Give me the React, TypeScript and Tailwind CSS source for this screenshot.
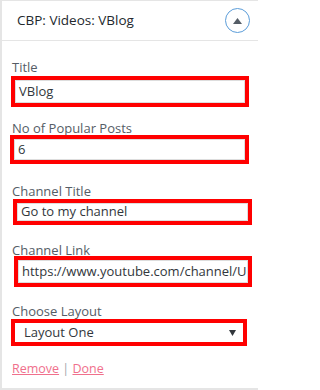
const fields = [
  {
    label: "Title",
    labelClass: "mt-[17px]",
    boxClass: "mt-[0px] ml-[9px] mr-[9px] h-[31px]",
    value: "VBlog",
  },
  {
    label: "No of Popular Posts",
    labelClass: "mt-[12px]",
    boxClass: "mt-[-2px] ml-[8px] mr-[9px] h-[29px]",
    value: "6",
  },
  {
    label: "Channel Title",
    labelClass: "mt-[18px]",
    boxClass: "mt-[-1px] ml-[11px] mr-[6px] h-[26px]",
    value: "Go to my channel",
  },
  {
    label: "Channel Link",
    labelClass: "mt-[16px]",
    boxClass: "mt-[-3px] ml-[12px] mr-[6px] h-[31px]",
    value: "https://www.youtube.com/channel/UCxYz1aBcDeFgHiJk",
  },
];

function TriangleUp() {
  return (
    <svg width="9" height="6" viewBox="0 0 9 6">
      <path d="M4.5 0 L9 6 L0 6 Z" fill="#555d66" />
    </svg>
  );
}

export default function App() {
  return (
    <div
      className="w-[258px] h-[390px] bg-white border-l-2 border-t border-b-2 border-[#e5e5e5] overflow-hidden"
      style={{ fontFamily: '"Open Sans", "Noto Sans", sans-serif' }}
    >
      <div className="h-[40px] border-b border-[#e5e5e5] flex items-center justify-between pl-[15px] pr-[8px]">
        <span className="text-[13.5px] text-[#23282d]">CBP: Videos: VBlog</span>
        <div className="w-[25px] h-[25px] rounded-full border border-[#5b9dd9] flex items-center justify-center">
          <TriangleUp />
        </div>
      </div>

      <div className="flex flex-col">
        {fields.map((f) => (
          <div key={f.label} className="flex flex-col">
            <label className={`${f.labelClass} pl-[10px] h-[18px] leading-[18px] text-[13px] text-[#555d66]`}>
              {f.label}
            </label>
            <div className={`${f.boxClass} border-4 border-[#ff0000]`}>
              <div className="h-full border border-[#ddd] flex items-center pl-[3px] overflow-hidden whitespace-nowrap text-[13px] text-[#32373c]">
                {f.value}
              </div>
            </div>
          </div>
        ))}

        <label className="mt-[15px] pl-[10px] h-[18px] leading-[18px] text-[13px] text-[#555d66]">
          Choose Layout
        </label>
        <div className="mt-[-1px] ml-[9px] mr-[11px] h-[27px] border-4 border-[#ff0000]">
          <div className="h-full flex items-center justify-between pl-[9px] pr-[7px] text-[13px] text-[#32373c]">
            <span>Layout One</span>
            <svg width="7" height="6" viewBox="0 0 7 6">
              <path d="M0 0 L7 0 L3.5 6 Z" fill="#32373c" />
            </svg>
          </div>
        </div>

        <div className="mt-[14px] pl-[10px] text-[12.5px] leading-[18px]">
          <a href="#" className="text-[#f0708c] underline">
            Remove
          </a>
          <span className="text-[#a0a5aa]"> | </span>
          <a href="#" className="text-[#f0708c] underline">
            Done
          </a>
        </div>
      </div>
    </div>
  );
}
